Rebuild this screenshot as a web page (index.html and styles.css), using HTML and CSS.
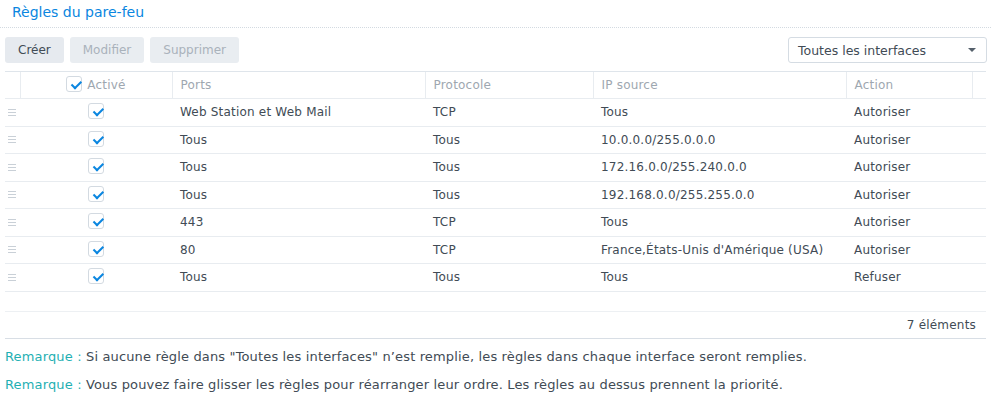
FILE: index.html
```html
<!DOCTYPE html>
<html lang="fr">
<head>
  <meta charset="UTF-8">
  <title>Règles du pare-feu</title>
  <link rel="stylesheet" href="styles.css">
</head>
<body>
  <div class="page">
    <h1 class="titre">Règles du pare-feu</h1>

    <div class="barre">
      <div class="boutons">
        <button class="btn">Créer</button>
        <button class="btn" disabled>Modifier</button>
        <button class="btn" disabled>Supprimer</button>
      </div>
      <div class="select">
        <span>Toutes les interfaces</span>
        <span class="fleche"></span>
      </div>
    </div>

    <table class="regles">
      <colgroup>
        <col style="width:15px">
        <col style="width:152px">
        <col style="width:253px">
        <col style="width:168px">
        <col style="width:253px">
        <col style="width:126px">
        <col style="width:14px">
      </colgroup>
      <thead>
        <tr>
          <th></th>
          <th class="col-actif"><span class="case"></span>Activé</th>
          <th>Ports</th>
          <th>Protocole</th>
          <th>IP source</th>
          <th>Action</th>
          <th></th>
        </tr>
      </thead>
      <tbody id="lignes"></tbody>
    </table>

    <div class="vide"></div>
    <div class="total">7 éléments</div>

    <p class="note"><span class="rem">Remarque :</span> Si aucune règle dans "Toutes les interfaces" n’est remplie, les règles dans chaque interface seront remplies.</p>
    <p class="note"><span class="rem">Remarque :</span> Vous pouvez faire glisser les règles pour réarranger leur ordre. Les règles au dessus prennent la priorité.</p>
  </div>

  <script>
    const regles = [
      ["Web Station et Web Mail", "TCP", "Tous", "Autoriser"],
      ["Tous", "Tous", "10.0.0.0/255.0.0.0", "Autoriser"],
      ["Tous", "Tous", "172.16.0.0/255.240.0.0", "Autoriser"],
      ["Tous", "Tous", "192.168.0.0/255.255.0.0", "Autoriser"],
      ["443", "TCP", "Tous", "Autoriser"],
      ["80", "TCP", "France,États-Unis d'Amérique (USA)", "Autoriser"],
      ["Tous", "Tous", "Tous", "Refuser"]
    ];

    const lignes = document.getElementById("lignes");
    regles.forEach(r => {
      const tr = document.createElement("tr");
      tr.innerHTML = `
        <td><span class="poignee"></span></td>
        <td class="col-actif"><span class="case"></span></td>
        <td>${r[0]}</td>
        <td>${r[1]}</td>
        <td>${r[2]}</td>
        <td>${r[3]}</td>
        <td></td>
      `;
      lignes.appendChild(tr);
    });
  </script>
</body>
</html>
```

FILE: styles.css
```css
body {
  margin: 0;
  font-family: "DejaVu Sans", Verdana, sans-serif;
  font-size: 12px;
  letter-spacing: 0.2px;
  color: #414b55;
  background: #fff;
}

.page {
  width: 981px;
  padding: 0 5px;
}

.titre {
  margin: 0 -5px;
  padding: 4px 12px 0;
  height: 23px;
  font-size: 14px;
  font-weight: normal;
  letter-spacing: 0;
  color: #0a86e0;
  border-bottom: 1px dotted #d3dae1;
}

.barre {
  display: flex;
  justify-content: space-between;
  align-items: center;
  padding: 9px 0 8px;
}

.boutons {
  display: flex;
  gap: 6px;
}

.btn {
  height: 26px;
  padding: 0 13px;
  border: none;
  border-radius: 3px;
  background: #e6eaef;
  font-family: inherit;
  font-size: 12px;
  letter-spacing: 0;
  color: #414b55;
}
.btn:disabled {
  color: #a9b2bb;
  background: #e9edf1;
}

.select {
  width: 199px;
  height: 26px;
  box-sizing: border-box;
  margin-right: -1px;
  border: 1px solid #d5dce3;
  border-radius: 3px;
  padding: 0 9px;
  display: flex;
  align-items: center;
  justify-content: space-between;
  font-size: 12.5px;
  letter-spacing: 0;
}
.fleche {
  width: 0;
  height: 0;
  border-left: 4px solid transparent;
  border-right: 4px solid transparent;
  border-top: 4px solid #55606b;
  margin-right: 1px;
}

.regles {
  width: 981px;
  table-layout: fixed;
  border-collapse: collapse;
}
.regles th,
.regles td {
  height: 26.5px;
  padding: 0 8px;
  text-align: left;
  white-space: nowrap;
  overflow: hidden;
  border-bottom: 1px solid #e8ecf0;
}
.regles th {
  height: 26px;
  font-weight: normal;
  color: #9ea7b0;
  border-top: 1px solid #dfe5eb;
  border-left: 1px solid #e8ecf0;
}
.regles th:first-child {
  border-left: none;
}
.regles td:first-child {
  padding: 0 3px;
}
.col-actif {
  text-align: center !important;
}
th.col-actif .case {
  margin-right: 5px;
}

.case {
  display: inline-block;
  vertical-align: middle;
  width: 14px;
  height: 14px;
  border: 1px solid #d3dae1;
  border-radius: 3px;
  background: #fff;
  position: relative;
  top: -1px;
}
.case::after {
  content: "";
  position: absolute;
  left: 3px;
  top: 1px;
  width: 8px;
  height: 4px;
  border-left: 2px solid #0a86e0;
  border-bottom: 2px solid #0a86e0;
  transform: rotate(-45deg) translate(-1px, 3px);
}

.poignee {
  display: block;
  width: 8px;
  height: 1px;
  background: #c9d0d7;
  box-shadow: 0 3px 0 #c9d0d7, 0 -3px 0 #c9d0d7;
}

.vide {
  height: 19px;
  border-bottom: 1px solid #edf0f3;
}

.total {
  height: 26px;
  line-height: 26px;
  text-align: right;
  padding-right: 10px;
  border-bottom: 1px solid #d8dee5;
}

.note {
  margin: 0;
  height: 28px;
  line-height: 36px;
  font-size: 13px;
  letter-spacing: 0.15px;
}
.rem {
  color: #1fb0b3;
}
```
